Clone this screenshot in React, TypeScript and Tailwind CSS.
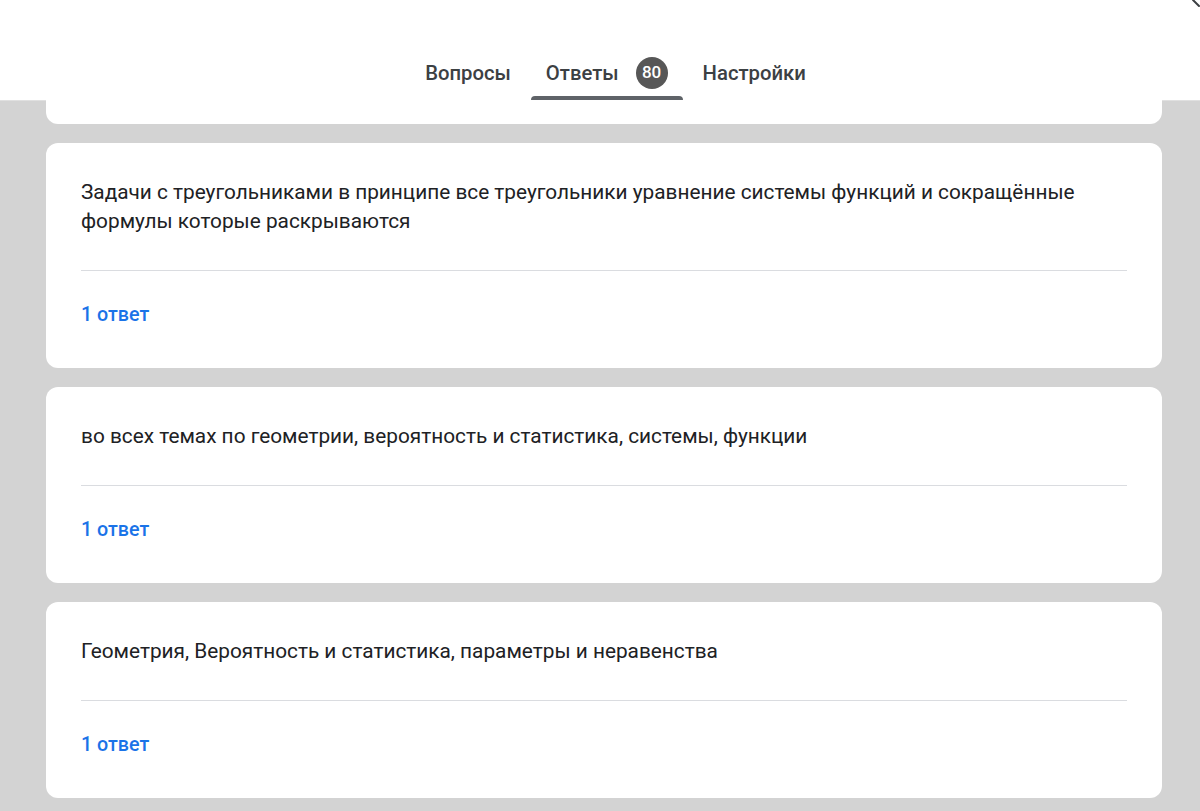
import React from 'react'

const answers = [
  'Задачи с треугольниками в принципе все треугольники уравнение системы функций и сокращённые формулы которые раскрываются',
  'во всех темах по геометрии, вероятность и статистика, системы, функции',
  'Геометрия, Вероятность и статистика, параметры и неравенства',
]

function Tab({ label, active, count }: { label: string; active?: boolean; count?: number }) {
  return (
    <div className="relative flex h-[54px] items-center px-[15px] text-[20.3px] font-medium text-[#3c4043]">
      <span>{label}</span>
      {count !== undefined && (
        <span className="ml-[17px] flex h-[32px] w-[32px] items-center justify-center rounded-full bg-[#575757] text-[17px] font-medium text-white">
          {count}
        </span>
      )}
      {active && <div className="absolute bottom-0 left-0 right-0 h-[4px] rounded-t-[4px] bg-[#5f6368]" />}
    </div>
  )
}

function AnswerCard({ text }: { text: string }) {
  return (
    <div className="rounded-[12px] bg-white px-[35px] pt-[35px] pb-[41px]">
      <p className="text-[20.8px] leading-[29px] text-[#202124]">{text}</p>
      <div className="mt-[34px] h-px bg-[#dadce0]" />
      <p className="mt-[32px] text-[19.7px] leading-[24px] font-medium text-[#1a73e8]">1 ответ</p>
    </div>
  )
}

export default function App() {
  return (
    <div className="relative h-[811px] overflow-hidden bg-[#d3d3d3]" style={{ fontFamily: 'Roboto, "Noto Sans", sans-serif' }}>
      <header className="flex h-[101px] items-end justify-center border-b border-[#e0e0e0] bg-white pl-[31px]">
        <div className="flex items-end gap-[5px]">
          <Tab label="Вопросы" />
          <Tab label="Ответы" active count={80} />
          <Tab label="Настройки" />
        </div>
      </header>
      <svg className="absolute right-0 top-0" width="10" height="8" viewBox="0 0 10 8">
        <path d="M3 0 L9 6" stroke="#3c4043" strokeWidth="2" strokeLinecap="round" />
      </svg>

      <main className="ml-[46px] mr-[38px] flex flex-col gap-[19px]">
        <div className="-mt-px h-[24px] rounded-b-[12px] bg-white" />
        {answers.map(a => (
          <AnswerCard key={a} text={a} />
        ))}
      </main>
    </div>
  )
}
